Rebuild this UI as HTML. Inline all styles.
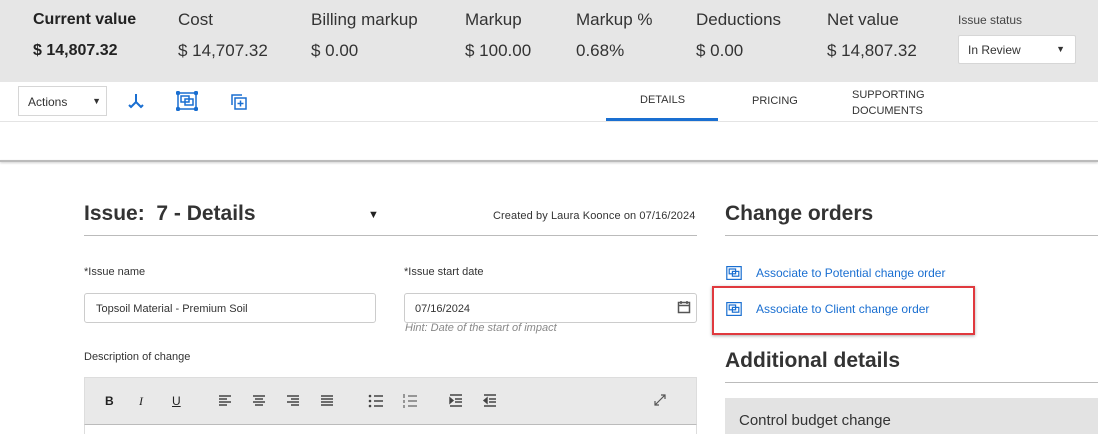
<!DOCTYPE html><html><head><style>
*{box-sizing:border-box;margin:0;padding:0}
body{width:1098px;height:434px;overflow:hidden;background:#fff;font-family:"Liberation Sans",sans-serif;color:#222;position:relative}
.a{position:absolute;white-space:nowrap}
.hd{position:absolute;left:0;top:0;width:1098px;height:82px;background:#e6e6e6}
.l{font-size:17px;color:#333}
.v{font-size:17px;color:#333}
.blue{color:#1a6fd1}
</style></head><body>
<div class="hd"></div>
<div class="a" style="left:33px;top:11px;font-size:16px;font-weight:bold">Current value</div>
<div class="a" style="left:33px;top:42px;font-size:16px;font-weight:bold">$ 14,807.32</div>
<div class="a l" style="left:178px;top:10px">Cost</div><div class="a v" style="left:178px;top:41px">$ 14,707.32</div>
<div class="a l" style="left:311px;top:10px">Billing markup</div><div class="a v" style="left:311px;top:41px">$ 0.00</div>
<div class="a l" style="left:465px;top:10px">Markup</div><div class="a v" style="left:465px;top:41px">$ 100.00</div>
<div class="a l" style="left:576px;top:10px">Markup %</div><div class="a v" style="left:576px;top:41px">0.68%</div>
<div class="a l" style="left:696px;top:10px">Deductions</div><div class="a v" style="left:696px;top:41px">$ 0.00</div>
<div class="a l" style="left:827px;top:10px">Net value</div><div class="a v" style="left:827px;top:41px">$ 14,807.32</div>
<div class="a" style="left:958px;top:13px;font-size:12px;color:#444">Issue status</div>
<div class="a" style="left:958px;top:35px;width:118px;height:29px;background:#fff;border:1px solid #d6d6d6;border-radius:2px;font-size:12px;padding:7px 9px;color:#333">In Review<span style="position:absolute;right:10px;top:8px;font-size:9px">▼</span></div>
<div class="a" style="left:0;top:121px;width:1098px;height:1px;background:#e4e4e4"></div>
<div class="a" style="left:18px;top:86px;width:89px;height:30px;border:1px solid #d6d6d6;font-size:12px;padding:8px 9px;color:#333">Actions<span style="position:absolute;right:5px;top:9px;font-size:9px">▼</span></div>
<svg class="a" style="left:127px;top:92px" width="18" height="18" viewBox="0 0 18 18" fill="none" stroke="#1a6fd1" stroke-width="2"><path d="M9 2v8M9 10l-5 5M9 10l5 5M2 13l2 2 2-2M12 13l2 2 2-2"/></svg>
<svg class="a" style="left:176px;top:91px" width="22" height="20" viewBox="0 0 22 20" fill="none" stroke="#1a6fd1" stroke-width="1.5"><rect x="2" y="2" width="18" height="16"/><rect x="5" y="5" width="8" height="6"/><rect x="9" y="8" width="8" height="6"/><g fill="#1a6fd1"><circle cx="2" cy="2" r="1.5"/><circle cx="20" cy="2" r="1.5"/><circle cx="2" cy="18" r="1.5"/><circle cx="20" cy="18" r="1.5"/></g></svg>
<svg class="a" style="left:230px;top:93px" width="18" height="18" viewBox="0 0 18 18" fill="none" stroke="#1a6fd1" stroke-width="1.5"><path d="M2 12V2h10"/><rect x="5" y="5" width="11" height="11"/><path d="M10.5 7.5v6M7.5 10.5h6"/></svg>
<div class="a" style="left:640px;top:94px;font-size:11px;color:#333">DETAILS</div>
<div class="a" style="left:606px;top:118px;width:112px;height:3px;background:#1a6fd1"></div>
<div class="a" style="left:752px;top:95px;font-size:11px;color:#333">PRICING</div>
<div class="a" style="left:852px;top:87px;font-size:11px;color:#333;line-height:16px">SUPPORTING<br>DOCUMENTS</div>
<div class="a" style="left:0;top:160px;width:1098px;height:2px;background:#bbb;box-shadow:0 1px 2px #ccc"></div>
<div class="a" style="left:84px;top:202px;font-size:21px;font-weight:bold;color:#333">Issue:&nbsp; 7 - Details</div>
<div class="a" style="left:368px;top:209px;font-size:11px">▼</div>
<div class="a" style="left:493px;top:210px;font-size:11px;color:#333;letter-spacing:0.1px">Created by Laura Koonce on 07/16/2024</div>
<div class="a" style="left:84px;top:235px;width:613px;height:1px;background:#bbb"></div>
<div class="a" style="left:84px;top:266px;font-size:11px;color:#333">*Issue name</div>
<div class="a" style="left:84px;top:293px;width:292px;height:30px;border:1px solid #ccc;border-radius:3px;font-size:11px;padding:9px 11px;color:#333">Topsoil Material - Premium Soil</div>
<div class="a" style="left:404px;top:266px;font-size:11px;color:#333">*Issue start date</div>
<div class="a" style="left:404px;top:293px;width:293px;height:30px;border:1px solid #ccc;border-radius:3px;font-size:11px;padding:9px 10px;color:#333">07/16/2024</div>
<svg class="a" style="left:677px;top:300px" width="14" height="14" viewBox="0 0 14 14" fill="none" stroke="#555" stroke-width="1.5"><rect x="1.5" y="2.5" width="11" height="10"/><path d="M1.5 5.5h11M4 1v3M10 1v3"/></svg>
<div class="a" style="left:405px;top:322px;font-size:11px;font-style:italic;color:#888">Hint: Date of the start of impact</div>
<div class="a" style="left:84px;top:351px;font-size:11px;color:#333">Description of change</div>
<div class="a" style="left:84px;top:377px;width:613px;height:48px;background:#e9e9e9;border:1px solid #ddd;border-bottom:1px solid #bbb"></div>
<div class="a" style="left:84px;top:425px;width:613px;height:9px;border-left:1px solid #ddd;border-right:1px solid #ddd"></div>
<div class="a" style="left:105px;top:394px;font-size:12px;font-weight:bold">B</div>
<div class="a" style="left:139px;top:394px;font-size:12px;font-style:italic;font-family:'Liberation Serif'">I</div>
<div class="a" style="left:172px;top:394px;font-size:12px;text-decoration:underline">U</div>
<svg class="a" style="left:218px;top:393px" width="290" height="16" viewBox="0 0 290 16" stroke="#444" stroke-width="1.4" fill="none">
<path d="M1 3h12M1 6h8M1 9h12M1 12h8"/>
<path d="M35 3h12M37 6h8M35 9h12M37 12h8"/>
<path d="M69 3h12M73 6h8M69 9h12M73 12h8"/>
<path d="M103 3h12M103 6h12M103 9h12M103 12h12"/>
<path d="M156 3h9M156 8h9M156 13h9"/><g fill="#444" stroke="none"><circle cx="152" cy="3" r="1.3"/><circle cx="152" cy="8" r="1.3"/><circle cx="152" cy="13" r="1.3"/></g>
<path d="M190 3h9M190 8h9M190 13h9M186 1v4M186 7v3M186 12v3" stroke-width="1"/>
<path d="M232 2h12M237 6h7M237 9h7M232 13h12"/><path d="M232 5l3 2.5-3 2.5z" fill="#444"/>
<path d="M266 2h12M271 6h7M271 9h7M266 13h12"/><path d="M269 5l-3 2.5 3 2.5z" fill="#444"/>
</svg>
<svg class="a" style="left:654px;top:394px" width="12" height="12" viewBox="0 0 12 12" stroke="#555" stroke-width="1.2" fill="none"><path d="M1 11L11 1M7 1h4v4M1 7v4h4"/></svg>
<div class="a" style="left:725px;top:202px;font-size:21px;font-weight:bold;color:#333">Change orders</div>
<div class="a" style="left:725px;top:235px;width:373px;height:1px;background:#bbb"></div>
<svg class="a" style="left:725px;top:265px" width="18" height="16" viewBox="0 0 22 20" fill="none" stroke="#1a6fd1" stroke-width="1.5"><rect x="2" y="2" width="18" height="16"/><rect x="5" y="5" width="8" height="6"/><rect x="9" y="8" width="8" height="6"/></svg>
<div class="a blue" style="left:756px;top:266px;font-size:12px">Associate to Potential change order</div>
<div class="a" style="left:712px;top:286px;width:263px;height:49px;border:2px solid #e0393e;box-shadow:0 1px 3px #aaa"></div>
<svg class="a" style="left:725px;top:301px" width="18" height="16" viewBox="0 0 22 20" fill="none" stroke="#1a6fd1" stroke-width="1.5"><rect x="2" y="2" width="18" height="16"/><rect x="5" y="5" width="8" height="6"/><rect x="9" y="8" width="8" height="6"/></svg>
<div class="a blue" style="left:756px;top:302px;font-size:12px">Associate to Client change order</div>
<div class="a" style="left:725px;top:349px;font-size:21px;font-weight:bold;color:#333">Additional details</div>
<div class="a" style="left:725px;top:382px;width:373px;height:1px;background:#bbb"></div>
<div class="a" style="left:725px;top:398px;width:373px;height:36px;background:#e3e3e3;font-size:15px;padding:14px 14px;color:#333">Control budget change</div>
</body></html>
